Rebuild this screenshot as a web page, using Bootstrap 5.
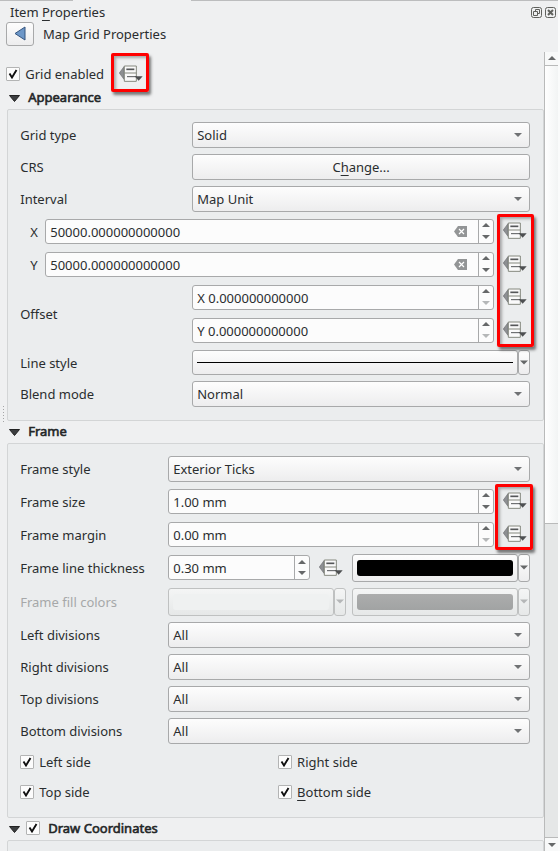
<!DOCTYPE html>
<html lang="en">
<head>
<meta charset="utf-8">
<meta name="viewport" content="width=device-width, initial-scale=1">
<title>Item Properties</title>
<link href="https://cdn.jsdelivr.net/npm/bootstrap@5.3.0/dist/css/bootstrap.min.css" rel="stylesheet">
<style>
:root{--edge:#a8a9aa;--ink:#2a2d2f;--face:linear-gradient(#fdfdfd,#ededee);
--tick:url("data:image/svg+xml,%3Csvg xmlns='http://www.w3.org/2000/svg' viewBox='0 0 14 14'%3E%3Cpath d='M3.5 6.5 6 10.5 10.5 3' fill='none' stroke='%23111' stroke-width='1.9'/%3E%3C/svg%3E");
--drop:url("data:image/svg+xml,%3Csvg xmlns='http://www.w3.org/2000/svg' viewBox='0 0 8 4'%3E%3Cpath d='M0 0h8L4 4z' fill='%23707274'/%3E%3C/svg%3E")}
body{font:13px/18px "Noto Sans",sans-serif;color:var(--ink);background:#eff0f1;border-right:2px solid #fafbfb}
button,input,select{font:inherit;color:inherit}
u{text-underline-offset:3px}
svg{color:#666869}
button:disabled svg{color:#b5b7b8}
.tabstrip{height:2px}
.tabstrip i{background:#bcbdbe;height:1px}
.tab-prev{width:73px}.tab-gap{width:118px}
.titlebar{height:20px;padding:1px 2px 0 10px;gap:3px}
.titlebar svg{width:11px;height:11px;display:block}
.crumb{height:24px;padding-left:6px;gap:9px}
.face{background:var(--face);border:1px solid var(--edge);border-radius:3px;padding:0}
.back{width:28px;height:24px}
.splitter{width:7px;padding-bottom:72px}
.splitter i{width:1px;height:18px;background:repeating-linear-gradient(#a5a6a7 0 1px,transparent 1px 3px)}
.panel{margin-top:6px}
.enable{height:33px;padding-top:11px;gap:15px}
.tickbox.form-check-input{width:14px;height:14px;margin:0;border:1px solid #b3b4b4;border-radius:1px;background:#fcfcfc var(--tick) center/14px no-repeat;flex:none}
.check{gap:5px}
.section-head{height:24px;gap:8px;padding-left:3px;color:#232627;-webkit-text-stroke:.6px #232627}
.gap-head{height:22px;padding-bottom:2px}
.head-check{gap:8px;margin-left:-2px}
.section-head svg,.fold{width:11px;height:7px}
.fold{background:none;border:0;padding:0;display:flex;margin-top:3px}
.group-box{background:#ebedee;border:1px solid #d3d5d6;border-radius:2px;margin-left:1px;padding:12px 13px 13px 12px}
.stack-8{display:grid;gap:8px}
.rows{display:grid;gap:6px}
.lab{flex:none}
.wide-lab{width:172px}
.mid-lab{width:148px}
.axis-lab{width:25px;padding-left:10px}
.spin-row .lab,.low .lab{padding-top:1px}
.combo{height:26px;border:1px solid var(--edge);border-radius:3px;padding:0 20px 0 4px;appearance:none;background:var(--drop) right 7px center/8px 4px no-repeat,var(--face)}
.combo-h{height:26px}
.spin-block{display:grid;gap:8px;padding:1px 0}
.spin{height:25px;border:1px solid var(--edge);border-radius:3px;background:#fcfcfc;overflow:hidden}
.spin input{border:0;background:none;padding:1px 4px 0;width:100%;min-width:0;outline:0}
.arrows{width:15px;border-left:1px solid var(--edge);flex:none}
.arrows button{border:0;background:none;padding:0;flex:1;display:flex;align-items:center;justify-content:center}
.arrows svg{width:8px;height:4px}
.clear{border:0;background:none;padding:0;margin-right:11px;display:flex}
.clear svg{width:13px;height:11px}
.override{border:0;background:none;padding:0;width:24px;height:18px;display:flex;flex:none}
.override svg{width:24px;height:17px}
.spin-row{gap:9px;padding-right:3px}
.split-main{height:28px;padding:5px 4px}
.split-drop{width:12px;height:28px;display:flex;align-items:center;justify-content:center}
.split-drop svg{width:8px;height:5px}
.low .split-main,.low .split-drop{height:25px}
.line{height:1px;background:#000}
.swatch{height:16px;border-radius:3px;background:#000}
.off .face{border-color:#bfc1c1;background:linear-gradient(#f4f5f5,#e6e8e8)}
.off .swatch{background:linear-gradient(#acadad,#a1a3a3)}
.off .swatch.empty{background:#eff1f1}
.off{color:#a6a8a9}
.pair{width:178px;flex:none}
.half{flex:1;gap:9px;padding-right:9px;min-width:0}
.fill-one{flex:1;padding-right:6px;min-width:0}
.sides{display:grid;grid-template-columns:1fr 1fr;gap:12px 6px;padding:3px 0}
.callout{position:absolute;border:3px solid #f00;border-radius:2px;box-shadow:2px 3px 3px rgba(0,0,0,.5),inset 2px 2px 3px rgba(0,0,0,.3);pointer-events:none}
.c-enable{inset:-10px -6px -7px -8px}
.c-interval{top:-4px;bottom:-3px;right:-4px;width:37px}
.c-frame{top:-4px;bottom:-2px;right:-3px;width:38px}
.bar{width:14px;border-left:1px solid #b9baba;background:#e5e7e7;flex:none}
.bar-btn{height:13px;border:0;background:#f8f9f9;padding:0;display:flex;align-items:center;justify-content:center;flex:none}
.bar-btn svg{width:8px;height:4px}
.thumb{height:59.5%;background:linear-gradient(90deg,#fff,#f2f4f4);border:solid #b9baba;border-width:1px 0}
.divide{border-bottom:1px solid #b9baba}
</style>
<script src="https://cdn.jsdelivr.net/npm/bootstrap@5.3.0/dist/js/bootstrap.bundle.min.js"></script>
</head>
<body class="vh-100 overflow-hidden d-flex flex-column">
<svg class="d-none">
<symbol id="ov" viewBox="0 0 72 51"><path d="M1 24 15 5v38z" fill="#8d8f92" stroke="#6e7072" stroke-width="2"/><path d="M16 3h36v46H16z" fill="#fafafa" stroke="#85887f" stroke-width="3"/><path d="M22 13h24" stroke="#555759" stroke-width="5"/><path d="M16 24h36" stroke="#85887f" stroke-width="3"/><path d="M24 35h29" stroke="#555759" stroke-width="3"/><path d="M47 34h24L59 47z" fill="#4d4f51"/></symbol>
<symbol id="up" viewBox="0 0 8 4"><path d="M0 4h8L4 0z" fill="currentColor"/></symbol>
<symbol id="dn" viewBox="0 0 8 4"><path d="M0 0h8L4 4z" fill="currentColor"/></symbol>
<symbol id="fold" viewBox="0 0 11 7"><path d="M.5.5h10l-5 6z" fill="#3c3e40" stroke="#222"/></symbol>
<symbol id="clr" viewBox="0 0 13 11"><path d="M4 0h9v11H4L0 5.500z" fill="#939596"/><path d="m5 3 5 5m0-5L5 8" stroke="#fff" stroke-width="1.200"/></symbol>
</svg>
<div class="tabstrip d-flex"><i class="tab-prev"></i><span class="tab-gap"></span><i class="flex-grow-1"></i></div>
<header class="titlebar d-flex align-items-center">
<span class="me-auto">Item <u>P</u>roperties</span>
<button class="btn p-0 border-0" aria-label="Float"><svg viewBox="0 0 11 11" fill="none" stroke="#5f615d"><rect x=".5" y=".5" width="10" height="10" rx="2"/><path d="M4.500 4V2.500h4v4H7M2.500 4.500h4v4h-4z"/></svg></button>
<button class="btn p-0 border-0" aria-label="Close"><svg viewBox="0 0 11 11" fill="none" stroke="#5f615d"><rect x=".5" y=".5" width="10" height="10" rx="2"/><path d="m3 3 5 5m0-5L3 8" stroke-width="2"/></svg></button>
</header>
<div class="crumb d-flex align-items-center">
<button class="face back d-flex align-items-center justify-content-center" aria-label="Back"><svg width="12" height="15" viewBox="0 0 12 15"><path d="M11 1v13L1 7.500z" fill="#6d97c8" stroke="#35557f"/></svg></button>
<span>Map Grid Properties</span>
</div>
<div class="panel d-flex flex-grow-1 overflow-hidden">
<div class="splitter d-flex align-items-center justify-content-center"><i></i></div>
<main class="flex-grow-1 overflow-hidden">
<div class="enable d-flex align-items-center">
<div class="check d-flex align-items-center"><input class="form-check-input tickbox" type="checkbox" id="grid" checked><label for="grid">Grid enabled</label></div>
<div class="position-relative d-flex align-self-stretch align-items-center"><button class="override" aria-label="Grid enabled override"><svg><use href="#ov"/></svg></button><span class="callout c-enable"></span></div>
</div>
<div class="section-head d-flex align-items-center"><button class="fold" aria-label="Collapse Appearance"><svg><use href="#fold"/></svg></button><span>Appearance</span></div>
<section class="group-box rows">
<div class="d-flex align-items-center"><label class="lab wide-lab" for="gt">Grid type</label><select id="gt" class="combo flex-grow-1"><option>Solid</option></select></div>
<div class="d-flex align-items-center"><span class="lab wide-lab" id="crs">CRS</span><button class="face combo-h flex-grow-1" aria-describedby="crs">C<u>h</u>ange...</button></div>
<div class="d-flex align-items-center"><label class="lab wide-lab" for="iv">Interval</label><select id="iv" class="combo flex-grow-1"><option>Map Unit</option></select></div>
<div class="position-relative spin-block">
<div class="d-flex align-items-center spin-row"><div class="d-flex align-items-center flex-grow-1"><label class="lab axis-lab" for="ix">X</label><div class="spin d-flex align-items-center flex-grow-1"><input id="ix" value="50000.000000000000"><button class="clear" aria-label="Clear X"><svg><use href="#clr"/></svg></button><span class="arrows d-flex flex-column align-self-stretch"><button aria-label="Increase"><svg><use href="#up"/></svg></button><button aria-label="Decrease"><svg><use href="#dn"/></svg></button></span></div></div><button class="override" aria-label="Interval X override"><svg><use href="#ov"/></svg></button></div>
<div class="d-flex align-items-center spin-row"><div class="d-flex align-items-center flex-grow-1"><label class="lab axis-lab" for="iy">Y</label><div class="spin d-flex align-items-center flex-grow-1"><input id="iy" value="50000.000000000000"><button class="clear" aria-label="Clear Y"><svg><use href="#clr"/></svg></button><span class="arrows d-flex flex-column align-self-stretch"><button aria-label="Increase"><svg><use href="#up"/></svg></button><button aria-label="Decrease"><svg><use href="#dn"/></svg></button></span></div></div><button class="override" aria-label="Interval Y override"><svg><use href="#ov"/></svg></button></div>
<div class="d-flex align-items-center"><label class="lab wide-lab" for="ox">Offset</label><div class="stack-8 flex-grow-1">
<div class="d-flex align-items-center spin-row"><div class="spin d-flex align-items-center flex-grow-1"><input id="ox" value="X 0.000000000000"><span class="arrows d-flex flex-column align-self-stretch"><button aria-label="Increase"><svg><use href="#up"/></svg></button><button aria-label="Decrease" disabled><svg><use href="#dn"/></svg></button></span></div><button class="override" aria-label="Offset X override"><svg><use href="#ov"/></svg></button></div>
<div class="d-flex align-items-center spin-row"><div class="spin d-flex align-items-center flex-grow-1"><input aria-label="Offset Y" value="Y 0.000000000000"><span class="arrows d-flex flex-column align-self-stretch"><button aria-label="Increase"><svg><use href="#up"/></svg></button><button aria-label="Decrease" disabled><svg><use href="#dn"/></svg></button></span></div><button class="override" aria-label="Offset Y override"><svg><use href="#ov"/></svg></button></div>
</div></div>
<span class="callout c-interval"></span>
</div>
<div class="d-flex align-items-center low"><span class="lab wide-lab">Line style</span><button class="face split-main flex-grow-1" aria-label="Line style"><span class="line d-block"></span></button><button class="face split-drop" aria-label="Line style menu"><svg><use href="#dn"/></svg></button></div>
<div class="d-flex align-items-center"><label class="lab wide-lab" for="bm">Blend mode</label><select id="bm" class="combo flex-grow-1"><option>Normal</option></select></div>
</section>
<div class="section-head gap-head d-flex align-items-center"><button class="fold" aria-label="Collapse Frame"><svg><use href="#fold"/></svg></button><span>Frame</span></div>
<section class="group-box rows">
<div class="d-flex align-items-center"><label class="lab mid-lab" for="fs">Frame style</label><select id="fs" class="combo flex-grow-1"><option>Exterior Ticks</option></select></div>
<div class="position-relative spin-block">
<div class="d-flex align-items-center spin-row"><div class="d-flex align-items-center flex-grow-1"><label class="lab mid-lab" for="fz">Frame size</label><div class="spin d-flex align-items-center flex-grow-1"><input id="fz" value="1.00 mm"><span class="arrows d-flex flex-column align-self-stretch"><button aria-label="Increase"><svg><use href="#up"/></svg></button><button aria-label="Decrease"><svg><use href="#dn"/></svg></button></span></div></div><button class="override" aria-label="Frame size override"><svg><use href="#ov"/></svg></button></div>
<div class="d-flex align-items-center spin-row"><div class="d-flex align-items-center flex-grow-1"><label class="lab mid-lab" for="fm">Frame margin</label><div class="spin d-flex align-items-center flex-grow-1"><input id="fm" value="0.00 mm"><span class="arrows d-flex flex-column align-self-stretch"><button aria-label="Increase"><svg><use href="#up"/></svg></button><button aria-label="Decrease" disabled><svg><use href="#dn"/></svg></button></span></div></div><button class="override" aria-label="Frame margin override"><svg><use href="#ov"/></svg></button></div>
<span class="callout c-frame"></span>
</div>
<div class="d-flex align-items-center"><label class="lab mid-lab" for="ft">Frame line thickness</label><div class="d-flex align-items-center half"><div class="spin d-flex align-items-center flex-grow-1"><input id="ft" value="0.30 mm"><span class="arrows d-flex flex-column align-self-stretch"><button aria-label="Increase"><svg><use href="#up"/></svg></button><button aria-label="Decrease"><svg><use href="#dn"/></svg></button></span></div><button class="override" aria-label="Frame line thickness override"><svg><use href="#ov"/></svg></button></div><div class="d-flex pair"><button class="face split-main flex-grow-1" aria-label="Line color"><span class="swatch d-block"></span></button><button class="face split-drop" aria-label="Line color menu"><svg><use href="#dn"/></svg></button></div></div>
<div class="d-flex align-items-center off"><span class="lab mid-lab">Frame fill colors</span><div class="d-flex fill-one"><button class="face split-main flex-grow-1" disabled aria-label="Fill color 1"><span class="swatch empty d-block"></span></button><button class="face split-drop" disabled aria-label="Fill color 1 menu"><svg><use href="#dn"/></svg></button></div><div class="d-flex pair"><button class="face split-main flex-grow-1" disabled aria-label="Fill color 2"><span class="swatch d-block"></span></button><button class="face split-drop" disabled aria-label="Fill color 2 menu"><svg><use href="#dn"/></svg></button></div></div>
<div class="d-flex align-items-center"><label class="lab mid-lab" for="ld">Left divisions</label><select id="ld" class="combo flex-grow-1"><option>All</option></select></div>
<div class="d-flex align-items-center"><label class="lab mid-lab" for="rd">Right divisions</label><select id="rd" class="combo flex-grow-1"><option>All</option></select></div>
<div class="d-flex align-items-center"><label class="lab mid-lab" for="td">Top divisions</label><select id="td" class="combo flex-grow-1"><option>All</option></select></div>
<div class="d-flex align-items-center"><label class="lab mid-lab" for="bd">Bottom divisions</label><select id="bd" class="combo flex-grow-1"><option>All</option></select></div>
<div class="sides">
<div class="check d-flex align-items-center"><input class="form-check-input tickbox" type="checkbox" id="ls" checked><label for="ls">Left side</label></div>
<div class="check d-flex align-items-center"><input class="form-check-input tickbox" type="checkbox" id="rs" checked><label for="rs">Right side</label></div>
<div class="check d-flex align-items-center"><input class="form-check-input tickbox" type="checkbox" id="ts" checked><label for="ts">Top side</label></div>
<div class="check d-flex align-items-center"><input class="form-check-input tickbox" type="checkbox" id="bs" checked><label for="bs"><u>B</u>ottom side</label></div>
</div>
</section>
<div class="section-head gap-head d-flex align-items-center"><button class="fold" aria-label="Collapse Draw Coordinates"><svg><use href="#fold"/></svg></button><div class="d-flex align-items-center head-check"><input class="form-check-input tickbox" type="checkbox" id="dc" checked><label for="dc">Draw Coordinates</label></div></div>
<section class="group-box"></section>
</main>
<div class="bar d-flex flex-column"><button class="bar-btn" aria-label="Scroll up"><svg><use href="#up"/></svg></button><div class="flex-grow-1 divide"><div class="thumb"></div></div><button class="bar-btn" aria-label="Scroll down"><svg><use href="#dn"/></svg></button></div>
</div>
</body>
</html>
